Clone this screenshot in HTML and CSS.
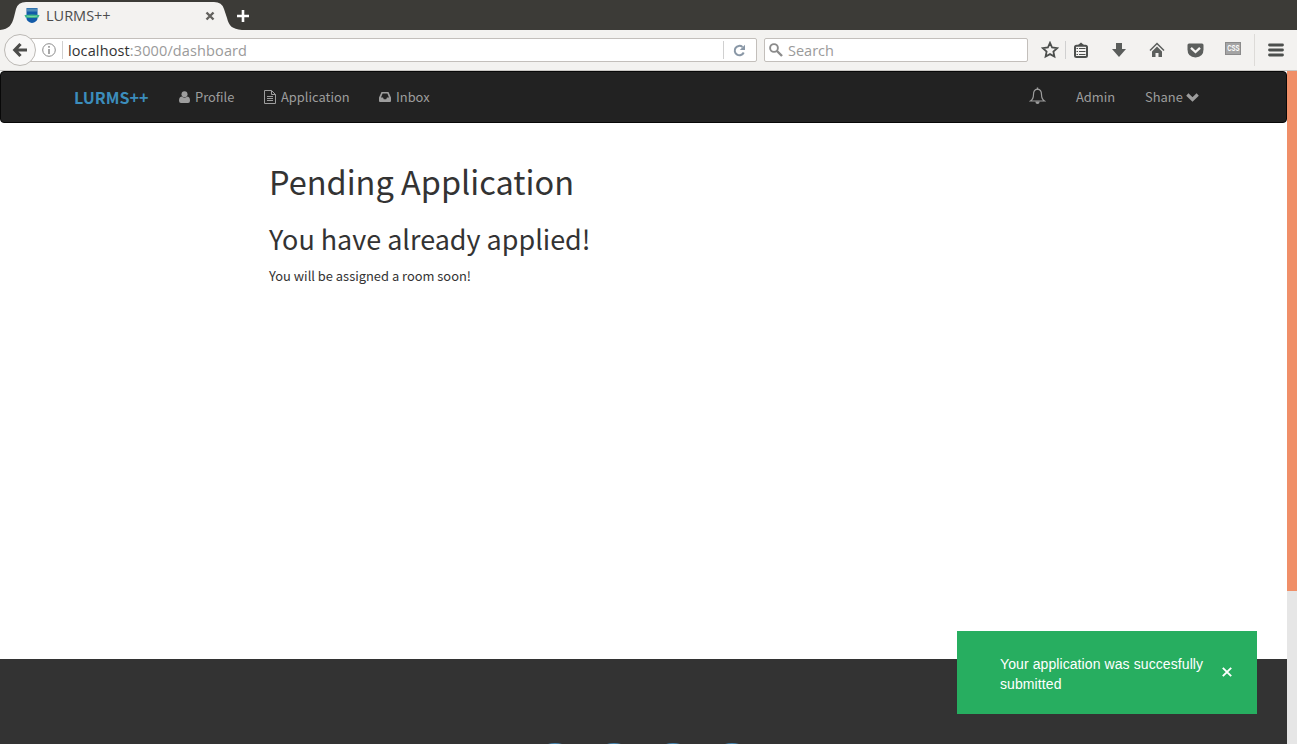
FILE: index.html
```html
<!DOCTYPE html>
<html lang="en">
<head>
<meta charset="utf-8">
<title>LURMS++</title>
<link rel="stylesheet" href="styles.css">
</head>
<body>
<div class="browser">
  <header class="tabstrip">
    <svg class="tab-shape" width="244" height="30" viewBox="0 0 244 30"><path d="M0 30C9 29 12 25 14 17L16 9Q18 2 26 2H214Q222 2 224 9L227 18C229 26 232 29 242 30Z" fill="#f3f2f0"/></svg>
    <svg class="favicon" width="16" height="17" viewBox="0 0 16 17"><path d="M2.500 1h11v11q-1 3-5.500 4-4.500-1-5.500-4z" fill="#135ba8"/><path d="M3 1.500h10v3H3z" fill="#4f8db8"/><path d="M0.500 8q7.500-1 15 0l-1 2.500q-6.500 1.200-13 0z" fill="#39b58b"/><path d="M3 9.200q5 .8 10 0" stroke="#80d4a0" fill="none"/></svg>
    <span class="tab-title">LURMS++</span>
    <svg class="tab-close" width="10" height="10" viewBox="0 0 10 10"><path d="M1.500 1.500l7 7m0-7l-7 7" stroke="#62615e" stroke-width="2.400"/></svg>
    <svg class="tab-new" width="14" height="14" viewBox="0 0 14 14"><path d="M7 1v12M1 7h12" stroke="#fff" stroke-width="2.600"/></svg>
  </header>
  <div class="toolbar">
    <div class="address">
      <svg class="info" width="14" height="14" viewBox="0 0 14 14"><circle cx="7" cy="7" r="6.300" fill="none" stroke="#8b8b8b"/><path d="M7 6v5M7 3v1.700" stroke="#8b8b8b" stroke-width="1.500"/></svg>
      <i class="rule"></i>
      <span class="url"><b>localhost</b>:3000/dashboard</span>
      <i class="rule"></i>
      <svg class="reload" width="13" height="13" viewBox="0 0 13 13"><path d="M10.700 8.500A4.700 4.700 0 1 1 9.500 3" fill="none" stroke="#8997a6" stroke-width="2"/><path d="M12 .8V6H6.800z" fill="#8997a6"/></svg>
    </div>
    <div class="back"><svg width="16" height="16" viewBox="0 0 16 16"><path d="M8.500 2L2.800 8l5.700 6M3 8h12" fill="none" stroke="#4c4c4a" stroke-width="3.200"/></svg></div>
    <div class="search">
      <svg width="14" height="14" viewBox="0 0 14 14"><circle cx="5" cy="5" r="3.900" fill="none" stroke="#8b8b8b" stroke-width="1.900"/><path d="M8 8l5 5" stroke="#8b8b8b" stroke-width="2.400"/></svg>
      <span>Search</span>
    </div>
    <div class="tools">
      <svg class="star" width="18" height="18" viewBox="0 0 18 18"><path d="M9 1.800l2.100 4.700 5.100.6-3.800 3.500 1 5L9 13.100l-4.400 2.500 1-5L1.800 7.100l5.100-.6z" fill="none" stroke="#4c4f4d" stroke-width="1.800"/></svg>
      <i class="rule"></i>
      <svg class="clip" width="16" height="17" viewBox="0 0 16 17"><path d="M4.500 3.500L8 .5l3.500 3z" fill="#4c4f4d"/><rect x="2" y="3.700" width="12" height="11.300" rx="1.500" fill="#f3f2f0" stroke="#4c4f4d" stroke-width="2"/><path d="M3.500 6.500h1.500m1 0h6.500M3.500 9.500h1.500m1 0h6.500M3.500 12.500h1.500m1 0h6.500" stroke="#4c4f4d" stroke-width="1.100"/></svg>
      <svg class="down" width="16" height="16" viewBox="0 0 16 16"><path d="M5 1h6v6h4l-7 8-7-8h4z" fill="#5a5d5b"/></svg>
      <svg class="home" width="16" height="16" viewBox="0 0 16 16"><path d="M1 8.500l7-7 7 7" fill="none" stroke="#5c5f5d" stroke-width="1.500"/><path d="M3 9.500l5-5 5 5V15H9.500v-4h-3v4H3z" fill="#5c5f5d"/></svg>
      <svg class="pocket" width="17" height="15" viewBox="0 0 17 15"><path d="M2 0.500h13q1.500 0 1.500 1.500v4.500Q16.500 14 8.500 14.500 .5 14 .5 6.500V2q0-1.500 1.500-1.500z" fill="#5c5f5d"/><path d="M4 4.800l4.500 4.200L13 4.800" fill="none" stroke="#f6f5f3" stroke-width="2.300"/></svg>
      <span class="css"><span>CSS</span></span>
      <i class="divider"></i>
      <svg class="menu" width="16" height="14" viewBox="0 0 16 14"><path d="M1.500 2h13M1.500 7h13M1.500 12h13" stroke="#4c4f4d" stroke-width="2.800" stroke-linecap="round"/></svg>
    </div>
  </div>
  <div class="viewport">
    <div class="page">
      <nav class="navbar">
        <a class="brand">LURMS++</a>
        <a class="link profile"><svg width="11" height="12" viewBox="0 0 11 12"><circle cx="5.500" cy="3.200" r="3" fill="currentColor"/><path d="M2.500 5.600q3 2.300 6 0Q11 6.200 11 9.800 11 12 9 12H2Q0 12 0 9.800 0 6.200 2.500 5.600z" fill="currentColor"/></svg><span>Profile</span></a>
        <a class="link application"><svg width="12" height="14" viewBox="0 0 12 14"><path d="M.5.5h7l4 4v9H.5zM7.500.5v4h4M3 6.500h6M3 8.500h6M3 10.500h6" fill="none" stroke="currentColor"/></svg><span>Application</span></a>
        <a class="link inbox"><svg width="12" height="10" viewBox="0 0 12 10"><path fill-rule="evenodd" d="M2.500 0h7L12 5.500V9q0 1-1 1H1q-1 0-1-1V5.500zM3.600 1.600L2 5.600h2l.8 1.600h2.400L8 5.600h2L8.400 1.600z" fill="currentColor"/></svg><span>Inbox</span></a>
        <svg class="bell" width="17" height="18" viewBox="0 0 17 18"><path d="M8.500 2.200C5.300 2.500 4.500 5 4.500 7.500c0 3-.8 5-3 6.500h14c-2.200-1.500-3-3.500-3-6.500 0-2.500-.8-5-4-5.300z" fill="none" stroke="currentColor" stroke-width="1.200"/><path d="M7.800.5h1.400v2H7.800zM6.300 14.500h4.400Q10.500 17 8.500 17t-2.200-2.500z" fill="currentColor"/></svg>
        <a class="link admin"><span>Admin</span></a>
        <a class="link user"><span>Shane</span><svg width="13" height="9" viewBox="0 0 13 9"><path d="M1.300 1.500l5.200 5 5.200-5" fill="none" stroke="currentColor" stroke-width="3.200"/></svg></a>
      </nav>
      <main class="content">
        <h1>Pending Application</h1>
        <h2>You have already applied!</h2>
        <p>You will be assigned a room soon!</p>
      </main>
      <footer class="footer"><i class="social"></i><i class="social"></i><i class="social"></i><i class="social"></i></footer>
    </div>
    <div class="scrollbar"><div class="thumb"></div></div>
    <div class="toast">
      <p>Your application was succesfully submitted</p>
      <svg width="10" height="10" viewBox="0 0 10 10"><path d="M.8.8l8.400 8.400m0-8.400L.8 9.200" stroke="#fff" stroke-width="1.900"/></svg>
    </div>
  </div>
</div>
</body>
</html>
```
FILE: styles.css
```css
* { box-sizing: border-box; }
body { margin: 0; }
svg { display: block; flex: none; }
h1, h2, p { margin: 0; font-weight: 400; }
.browser { width: 1297px; height: 744px; overflow: hidden; display: flex; flex-direction: column; background: #fff; }

.tabstrip { position: relative; flex: none; height: 30px; background: #3c3b37; display: flex; align-items: center; padding: 2px 0 0 24px; font: 14.5px/30px "Open Sans", "Noto Sans", sans-serif; color: #4c4c4c; }
.tab-shape { position: absolute; left: 0; top: 0; }
.favicon, .tab-title, .tab-close, .tab-new { position: relative; }
.favicon { margin-top: -1px; }
.tab-title { width: 159px; margin-left: 6px; height: 30px; }
.tab-new { margin-left: 21px; }

.toolbar { position: relative; flex: none; height: 41px; background: #f3f2f0; border-bottom: 1px solid #c9c7c4; display: flex; align-items: center; font: 14.5px/22px "Open Sans", "Noto Sans", sans-serif; color: #9a9a9a; }
.address, .search { height: 24px; border: 1px solid #c3bfbb; border-radius: 2px; background: #fff; display: flex; align-items: center; }
.address { width: 737px; margin-left: 20px; padding-left: 21px; }
.back { position: absolute; left: 4px; top: 4px; width: 32px; height: 32px; border: 1px solid #bcb9b5; border-radius: 50%; background: #f8f7f6; display: flex; align-items: center; justify-content: center; }
.rule { width: 1px; height: 18px; background: #d0d0d0; flex: none; }
.info { margin-right: 6px; }
.url { flex: 1; padding: 2px 0 0 5px; letter-spacing: .12px; }
.url b { font-weight: 400; color: #333; }
.reload { margin: 0 10px 0 9px; }
.search { width: 264px; margin-left: 7px; padding-left: 4px; gap: 5px; }
.search span { padding-top: 2px; }
.tools { display: flex; align-items: center; flex: 1; padding-left: 13px; }
.tools .rule { margin: 0 7px 0 6px; }
.clip { margin-right: 22px; }
.down { margin-right: 22px; }
.home { margin-right: 22px; }
.pocket { margin-right: 21px; }
.css { width: 16px; height: 13px; margin-top: -3px; border: 1px solid #8b8b8b; background: #a4a4a4; color: #fff; font: bold 9px/11px "Liberation Sans", sans-serif; display: flex; justify-content: center; }
.css span { flex: none; transform: scaleX(.66); }
.divider { width: 1px; height: 32px; background: #dddbd8; margin: 0 13px; }

.viewport { position: relative; flex: 1; display: flex; }
.page { width: 1287px; display: flex; flex-direction: column; font-family: "Noto Sans CJK SC", sans-serif; color: #333; }
.navbar { height: 52px; flex: none; background: #222; border: 1px solid #080808; border-radius: 4px; display: flex; align-items: center; padding-left: 73px; color: #9d9d9d; font-size: 12.9px; line-height: 20px; }
.brand { width: 105px; font-size: 16.1px; font-weight: 700; color: #3c8dbc; }
.link { display: flex; align-items: center; gap: 5px; white-space: nowrap; }
.profile { width: 85px; }
.application { width: 115px; }
.inbox { width: 651px; }
.bell { margin-top: -2px; margin-left: -1px; }
.admin { width: 69px; margin-left: 30px; }
.user { gap: 3px; }
.content { height: 536px; flex: none; padding: 35px 0 0 269px; }
h1 { font-size: 32.5px; line-height: 46px; }
h2 { font-size: 26.95px; line-height: 40px; margin-top: 15px; }
.content p { font-size: 12.9px; line-height: 20px; margin-top: 7px; }
.footer { flex: 1; background: #333; overflow: hidden; display: flex; justify-content: center; gap: 9px; padding-top: 84px; }
.social { width: 50px; height: 50px; flex: none; border-radius: 50%; background: #4a8ab5; }
.scrollbar { width: 10px; background: #e6e6e6; }
.thumb { height: 520px; background: #f08f68; }
.toast { position: absolute; left: 957px; top: 560px; width: 300px; height: 83px; background: #27ae60; color: #fff; display: flex; align-items: center; padding-left: 43px; font: 14px/20px "Liberation Sans", Arial, sans-serif; letter-spacing: .09px; }
.toast p { width: 222px; padding-top: 3px; }
.toast svg { margin-top: -1px; }
```
